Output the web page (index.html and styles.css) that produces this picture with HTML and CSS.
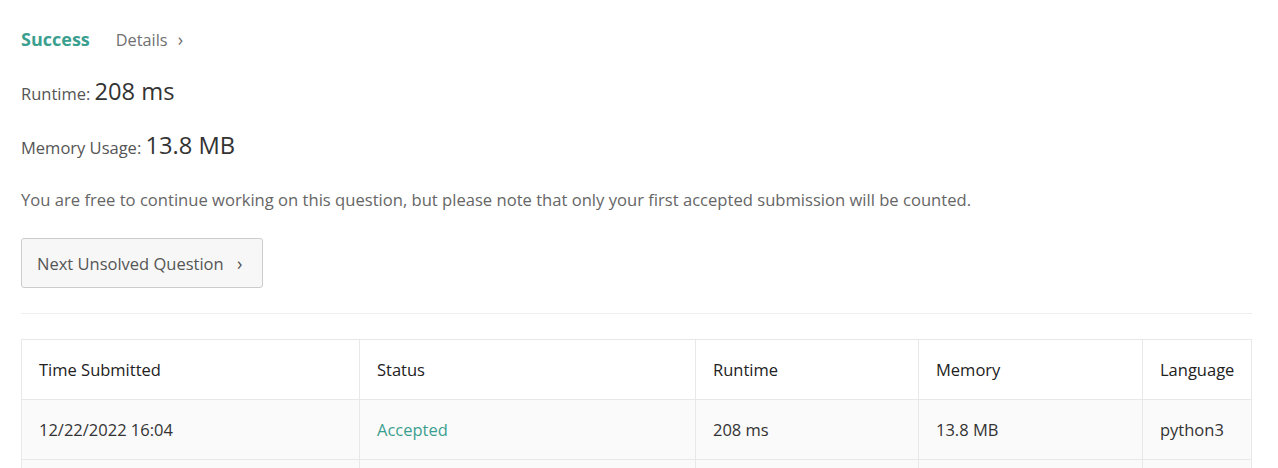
FILE: index.html
```html
<!DOCTYPE html>
<html>
<head>
<meta charset="utf-8">
<link rel="stylesheet" href="styles.css">
</head>
<body>
<div class="page">
  <div class="result-head">
    <span class="success">Success</span>
    <span class="details">Details <span class="chev">›</span></span>
  </div>
  <div class="stat"><span class="label">Runtime:</span> <span class="value">208 ms</span></div>
  <div class="stat"><span class="label">Memory Usage:</span> <span class="value">13.8 MB</span></div>
  <p class="note">You are free to continue working on this question, but please note that only your first accepted submission will be counted.</p>
  <button class="next-btn">Next Unsolved Question <span class="chev-btn">›</span></button>
  <hr class="divider">
  <table class="subs">
    <colgroup>
      <col class="c1"><col class="c2"><col class="c3"><col class="c4"><col>
    </colgroup>
    <tr class="head-row">
      <td>Time Submitted</td><td>Status</td><td>Runtime</td><td>Memory</td><td>Language</td>
    </tr>
    <tr class="data-row">
      <td>12/22/2022 16:04</td><td class="accepted">Accepted</td><td>208 ms</td><td>13.8 MB</td><td>python3</td>
    </tr>
    <tr class="data-row last">
      <td></td><td></td><td></td><td></td><td></td>
    </tr>
  </table>
</div>
</body>
</html>
```
FILE: styles.css
```css
html, body {
  margin: 0;
  padding: 0;
  background: #fff;
  height: 468px;
  overflow: hidden;
}
body {
  font-family: "Open Sans", "Noto Sans", sans-serif;
  color: #333;
}
.page {
  padding: 25px 26px 0 21px;
}
.result-head {
  display: flex;
  align-items: baseline;
  gap: 26px;
  height: 28px;
  line-height: 28px;
}
.success {
  font-size: 18px;
  font-weight: 700;
  color: #3b9f8f;
}
.details {
  font-size: 16.3px;
  color: #707070;
}
.chev {
  margin-left: 6px;
  font-size: 18px;
}
.stat {
  margin-top: 24px;
  height: 28px;
  line-height: 28px;
}
.stat + .stat {
  margin-top: 26px;
}
.label {
  font-size: 16.5px;
  color: #555;
}
.value {
  font-size: 23.7px;
  color: #333;
}
.note {
  margin: 27px 0 0;
  font-size: 16.6px;
  line-height: 28px;
  color: #666;
}
.next-btn {
  margin-top: 24px;
  display: block;
  width: 242px;
  height: 50px;
  border: 1px solid #ccc;
  border-radius: 3px;
  background: #f7f7f7;
  font-family: inherit;
  font-size: 16.5px;
  color: #555;
  text-align: left;
  padding: 0 0 0 15px;
}
.chev-btn {
  margin-left: 9px;
  font-size: 18px;
}
.divider {
  margin: 25px 0 0;
  border: 0;
  border-top: 1px solid #eee;
}
.subs {
  margin-top: 25px;
  width: 1231px;
  border-collapse: collapse;
  table-layout: fixed;
  font-size: 16.5px;
  color: #333;
}
.c1 { width: 338px; }
.c2 { width: 336px; }
.c3 { width: 223px; }
.c4 { width: 224px; }
.subs td {
  height: 59px;
  padding: 0 0 0 17px;
  border: 1px solid #e8e8e8;
  vertical-align: middle;
}
.head-row td {
  background: #fff;
  color: #222;
}
.data-row td {
  background: #fafafa;
}
.accepted {
  color: #3b9f8f;
}
```
